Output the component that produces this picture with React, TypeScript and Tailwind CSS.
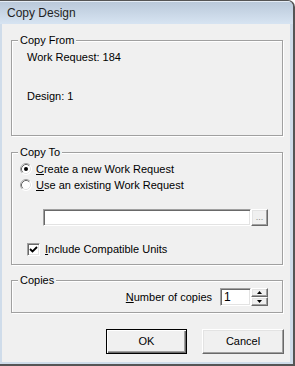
import React from "react";

const raised =
  "border border-t-white border-l-white border-r-[#696969] border-b-[#696969] shadow-[inset_-1px_-1px_0_#a0a0a0,inset_1px_1px_0_#e3e3e3] bg-[#f0f0f0]";
const sunken =
  "border border-t-[#a0a0a0] border-l-[#a0a0a0] border-r-white border-b-white shadow-[inset_1px_1px_0_#696969,inset_-1px_-1px_0_#e3e3e3] bg-white";
const group =
  "relative border border-[#a0a0a0] shadow-[inset_1px_1px_0_#fff,1px_1px_0_#fff]";

function Radio({ checked }: { checked?: boolean }) {
  return (
    <svg width="12" height="12" viewBox="0 0 12 12" className="shrink-0">
      <circle cx="6" cy="6" r="5.5" fill="#fff" stroke="#fff" />
      <path d="M2.11 9.89 A5.5 5.5 0 0 1 9.89 2.11" stroke="#a0a0a0" fill="none" />
      <path d="M2.82 9.18 A4.5 4.5 0 0 1 9.18 2.82" stroke="#696969" fill="none" />
      <path d="M9.18 2.82 A4.5 4.5 0 0 1 2.82 9.18" stroke="#e3e3e3" fill="none" />
      {checked && <circle cx="6" cy="6" r="2" fill="#000" />}
    </svg>
  );
}

function Legend({ children }: { children: React.ReactNode }) {
  return (
    <span className="absolute -top-[8px] left-[6px] px-[2px] bg-[#f0f0f0] leading-[14px]">
      {children}
    </span>
  );
}

export default function App() {
  return (
    <div
      className="w-[295px] h-[366px] flex flex-col border-t border-r-2 border-b-2 border-[#555] rounded-tr-[7px] bg-[#cfdcea] overflow-hidden text-[11px] text-black"
      style={{ fontFamily: '"Liberation Sans", Arial, sans-serif' }}
    >
      <div className="h-[23px] shrink-0 flex items-center pl-[7px] bg-gradient-to-b from-[#bac9da] to-[#d7e4f2] text-[12px] text-[#1f1f1f] border-t border-[#e4ecf5]">
        Copy Design
      </div>
      <div className="flex-1 ml-[2px] mr-[3px] mb-[2px] bg-[#f0f0f0] flex flex-col pl-[9px] pr-[7px]">
        {/* Copy From */}
        <div className={`${group} mt-[16px] h-[96px] pl-[15px] pt-[9px]`}>
          <Legend>Copy From</Legend>
          <div className="leading-[14px]">Work Request: 184</div>
          <div className="leading-[14px] mt-[25px]">Design: 1</div>
        </div>

        {/* Copy To */}
        <div className={`${group} mt-[16px] h-[113px] pt-[8px]`}>
          <Legend>Copy To</Legend>
          <div className="h-[16px] flex items-center gap-[4px] pl-[8px]">
            <Radio checked />
            <span>
              <span className="underline">C</span>reate a new Work Request
            </span>
          </div>
          <div className="h-[16px] flex items-center gap-[4px] pl-[8px]">
            <Radio />
            <span>
              <span className="underline">U</span>se an existing Work Request
            </span>
          </div>
          <div className="mt-[16px] ml-[31px] flex h-[17px]">
            <div className={`${sunken} w-[208px] h-[17px]`} />
            <div
              className={`${raised} w-[17px] h-[17px] flex items-end justify-center pb-[3px] text-[9px] leading-none text-[#8a8a8a]`}
            >
              ...
            </div>
          </div>
          <div className="mt-[17px] ml-[15px] flex items-center gap-[5px] h-[13px]">
            <div className={`${sunken} w-[13px] h-[13px] shrink-0 flex items-center justify-center`}>
              <svg width="9" height="9" viewBox="0 0 9 9">
                <path d="M1 4 L3.5 6.5 L8 2" stroke="#000" strokeWidth="1.8" fill="none" />
              </svg>
            </div>
            <span>
              <span className="underline">I</span>nclude Compatible Units
            </span>
          </div>
        </div>

        {/* Copies */}
        <div className={`${group} mt-[15px] h-[33px] pt-[7px] pr-[14px] flex justify-end`}>
          <Legend>Copies</Legend>
          <div className="flex items-center h-[18px]">
            <span className="mr-[8px]">
              <span className="underline">N</span>umber of copies
            </span>
            <div className={`${sunken} w-[31px] h-[18px] flex items-center pl-[3px] text-[12px] leading-none`}>
              1
            </div>
            <div className="flex flex-col w-[17px] h-[18px]">
              <div className={`${raised} h-[9px] flex items-center justify-center`}>
                <svg width="5" height="3" viewBox="0 0 5 3">
                  <path d="M2.5 0 L5 3 L0 3 Z" fill="#000" />
                </svg>
              </div>
              <div className={`${raised} h-[9px] flex items-center justify-center`}>
                <svg width="5" height="3" viewBox="0 0 5 3">
                  <path d="M0 0 L5 0 L2.5 3 Z" fill="#000" />
                </svg>
              </div>
            </div>
          </div>
        </div>

        {/* Buttons */}
        <div className="mt-[16px] flex justify-end gap-[15px] -mr-[1px]">
          <button className="w-[81px] h-[25px] border border-black shadow-[inset_1px_1px_0_#fff,inset_-1px_-1px_0_#696969,inset_-2px_-2px_0_#a0a0a0] bg-[#f0f0f0] text-[11px]">
            OK
          </button>
          <button className={`${raised} w-[82px] h-[25px] text-[11px]`}>Cancel</button>
        </div>
      </div>
    </div>
  );
}
